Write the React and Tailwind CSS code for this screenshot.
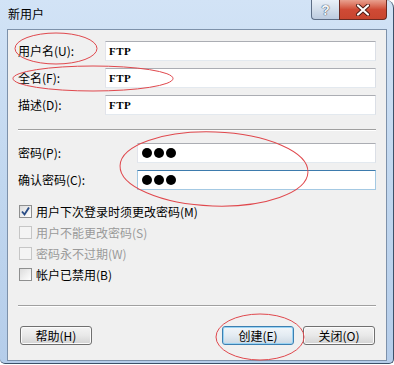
import React from "react";

const cjk = "font-['SimSun','Noto_Sans_CJK_SC',sans-serif]";

function Field({ label, labelW, value, password, focused }) {
  return (
    <div className="flex items-center h-[20px]">
      <div className={`shrink-0 text-[12px] leading-none text-black`} style={{ width: labelW }}>
        {label}
      </div>
      <div
        className={`flex-1 h-[20px] bg-white border flex items-center pl-[3px] ${
          focused
            ? "border-[#a4c9e3] border-t-[#3d7bad]"
            : "border-[#e3e9ef] border-t-[#abadb3] border-l-[#e2e3ea] border-r-[#dbdfe6]"
        }`}
      >
        {password ? (
          <div className="flex gap-[2px] pl-[1px]">
            <span className="w-[10px] h-[10px] rounded-full bg-black" />
            <span className="w-[10px] h-[10px] rounded-full bg-black" />
            <span className="w-[10px] h-[10px] rounded-full bg-black" />
          </div>
        ) : (
          <span className="font-['Liberation_Serif',serif] font-bold text-[11px] leading-none text-black tracking-[0.5px]">
            {value}
          </span>
        )}
      </div>
    </div>
  );
}

function Check({ label, checked, disabled }) {
  return (
    <div className="flex items-center h-[21px] pl-[1px]">
      <div
        className={`w-[13px] h-[13px] border flex items-center justify-center ${
          disabled
            ? "border-[#c6c6c6] bg-[#f4f4f4]"
            : "border-[#8e8f8f] bg-gradient-to-br from-[#dcdcdc] to-[#ffffff]"
        }`}
      >
        {checked && (
          <svg width="11" height="11" viewBox="0 0 11 11">
            <path d="M2 5.5 L4.5 8.5 L9 1.5" fill="none" stroke="#2a4d86" strokeWidth="1.9" />
          </svg>
        )}
      </div>
      <span
        className={`ml-[4px] text-[12px] leading-none ${disabled ? "text-[#9a9a9a]" : "text-black"}`}
      >
        {label}
      </span>
    </div>
  );
}

function Btn({ children, primary }) {
  return (
    <button
      className={`w-[72px] h-[19px] rounded-[3px] border text-[12px] leading-none text-black flex items-center justify-center ${
        primary
          ? "border-[#3c7fb1] bg-gradient-to-b from-[#f2f6fa] via-[#e3ebf2] to-[#cdd9e4] shadow-[inset_0_0_0_1px_#9ad3f3]"
          : "border-[#707070] bg-gradient-to-b from-[#f4f4f4] via-[#e8e8e8] to-[#d3d3d3] shadow-[inset_0_0_0_1px_#fbfbfb]"
      }`}
    >
      {children}
    </button>
  );
}

export default function App() {
  return (
    <div className={`relative w-[394px] h-[365px] bg-white ${cjk}`}>
      <div className="w-[394px] h-[364px] flex flex-col bg-gradient-to-b from-[#d2e3f6] via-[#c1d7ef] to-[#b5cdea] border-r border-b border-[#3c5169] rounded-tr-[8px] rounded-b-[5px]">
        {/* Title bar */}
        <div className="h-[29px] flex items-start">
          <span className="pl-[8px] pt-[8px] text-[12px] leading-none text-black font-['Noto_Sans_CJK_SC',sans-serif]">
            新用户
          </span>
          <div className="ml-auto mr-[6px] flex h-[20px]">
            <div className="w-[28px] h-[20px] border border-[#5d6e86] border-t-0 border-r-0 rounded-bl-[4px] bg-gradient-to-b from-[#e9f0f8] via-[#d3deeb] to-[#bccbdf] flex items-center justify-center">
              <span className="font-['Liberation_Sans',sans-serif] font-bold text-[14px] leading-none text-[#f4f6f9] [text-shadow:0_0_1px_#2d3a4c,0_0_1px_#2d3a4c]">
                ?
              </span>
            </div>
            <div className="w-[48px] h-[20px] border border-[#6b2a22] border-t-0 rounded-br-[4px] bg-gradient-to-b from-[#e8a08f] via-[#cf4a35] to-[#c8452f] flex items-center justify-center">
              <svg width="16" height="12" viewBox="0 0 16 12">
                <path d="M3 1.5 L13 10.5 M13 1.5 L3 10.5" stroke="#4a1a14" strokeWidth="4" strokeLinecap="round" />
                <path d="M3 1.5 L13 10.5 M13 1.5 L3 10.5" stroke="#ffffff" strokeWidth="2.2" strokeLinecap="round" />
              </svg>
            </div>
          </div>
        </div>

        {/* Client area */}
        <div className="ml-[7px] w-[380px] h-[332px] border border-[#7d91aa] bg-[#f0f0f0] px-[10px] pt-[11px] flex flex-col">
          <div className="flex flex-col gap-[7px]">
            <Field label="用户名(U):" labelW={87} value="FTP" />
            <Field label="全名(F):" labelW={87} value="FTP" />
            <Field label="描述(D):" labelW={87} value="FTP" />
          </div>

          <div className="mt-[14px] h-[2px] border-t border-[#a0a0a0] border-b border-b-white" />

          <div className="mt-[12px] flex flex-col gap-[7px]">
            <Field label="密码(P):" labelW={119} password />
            <Field label="确认密码(C):" labelW={119} password focused />
          </div>

          <div className="mt-[11px] flex flex-col">
            <Check label="用户下次登录时须更改密码(M)" checked />
            <Check label="用户不能更改密码(S)" disabled />
            <Check label="密码永不过期(W)" disabled />
            <Check label="帐户已禁用(B)" />
          </div>

          <div className="mt-[20px] h-[2px] border-t border-[#a0a0a0] border-b border-b-white" />

          <div className="mt-[19px] flex items-center">
            <div className="ml-[2px]">
              <Btn>帮助(H)</Btn>
            </div>
            <div className="ml-auto mr-[1px] flex gap-[9px]">
              <Btn primary>创建(E)</Btn>
              <Btn>关闭(O)</Btn>
            </div>
          </div>
        </div>
      </div>

      {/* Red annotation ellipses */}
      <svg className="absolute inset-0 pointer-events-none" width="394" height="365" viewBox="0 0 394 365">
        <g fill="none" stroke="#e0484d" strokeWidth="1">
          <ellipse cx="56" cy="48.5" rx="41" ry="15.5" />
          <ellipse cx="93" cy="78.5" rx="80" ry="12.5" />
          <ellipse cx="214" cy="169" rx="94" ry="37" transform="rotate(2 214 169)" />
          <ellipse cx="260" cy="337" rx="44" ry="23" />
        </g>
      </svg>
    </div>
  );
}
